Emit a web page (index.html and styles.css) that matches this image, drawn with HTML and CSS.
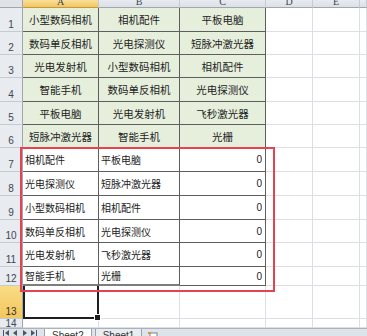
FILE: index.html
```html
<!DOCTYPE html>
<html lang="zh-CN">
<head>
    <meta charset="UTF-8">
    <title>Sheet2</title>
    <link rel="stylesheet" href="styles.css">
</head>
<body>
    <div class="sheet">
        <!-- cabecalho das colunas -->
        <div class="corner"></div>
        <div class="colhead selected">A</div>
        <div class="colhead">B</div>
        <div class="colhead">C</div>
        <div class="colhead">D</div>
        <div class="colhead">E</div>
        <div class="colhead"></div>

        <div class="rowhead">1</div>
        <div class="cell green">小型数码相机</div>
        <div class="cell green">相机配件</div>
        <div class="cell green">平板电脑</div>
        <div class="cell"></div><div class="cell"></div><div class="cell"></div>

        <div class="rowhead">2</div>
        <div class="cell green">数码单反相机</div>
        <div class="cell green">光电探测仪</div>
        <div class="cell green">短脉冲激光器</div>
        <div class="cell"></div><div class="cell"></div><div class="cell"></div>

        <div class="rowhead">3</div>
        <div class="cell green">光电发射机</div>
        <div class="cell green">小型数码相机</div>
        <div class="cell green">相机配件</div>
        <div class="cell"></div><div class="cell"></div><div class="cell"></div>

        <div class="rowhead">4</div>
        <div class="cell green">智能手机</div>
        <div class="cell green">数码单反相机</div>
        <div class="cell green">光电探测仪</div>
        <div class="cell"></div><div class="cell"></div><div class="cell"></div>

        <div class="rowhead">5</div>
        <div class="cell green">平板电脑</div>
        <div class="cell green">光电发射机</div>
        <div class="cell green">飞秒激光器</div>
        <div class="cell"></div><div class="cell"></div><div class="cell"></div>

        <div class="rowhead">6</div>
        <div class="cell green">短脉冲激光器</div>
        <div class="cell green">智能手机</div>
        <div class="cell green">光栅</div>
        <div class="cell"></div><div class="cell"></div><div class="cell"></div>

        <!-- resultado -->
        <div class="rowhead">7</div>
        <div class="cell data">相机配件</div>
        <div class="cell data">平板电脑</div>
        <div class="cell data num">0</div>
        <div class="cell"></div><div class="cell"></div><div class="cell"></div>

        <div class="rowhead">8</div>
        <div class="cell data">光电探测仪</div>
        <div class="cell data">短脉冲激光器</div>
        <div class="cell data num">0</div>
        <div class="cell"></div><div class="cell"></div><div class="cell"></div>

        <div class="rowhead">9</div>
        <div class="cell data">小型数码相机</div>
        <div class="cell data">相机配件</div>
        <div class="cell data num">0</div>
        <div class="cell"></div><div class="cell"></div><div class="cell"></div>

        <div class="rowhead">10</div>
        <div class="cell data">数码单反相机</div>
        <div class="cell data">光电探测仪</div>
        <div class="cell data num">0</div>
        <div class="cell"></div><div class="cell"></div><div class="cell"></div>

        <div class="rowhead">11</div>
        <div class="cell data">光电发射机</div>
        <div class="cell data">飞秒激光器</div>
        <div class="cell data num">0</div>
        <div class="cell"></div><div class="cell"></div><div class="cell"></div>

        <div class="rowhead">12</div>
        <div class="cell data last">智能手机</div>
        <div class="cell data last">光栅</div>
        <div class="cell data num">0</div>
        <div class="cell"></div><div class="cell"></div><div class="cell"></div>

        <div class="rowhead selected">13</div>
        <div class="cell active"><span class="handle"></span></div>
        <div class="cell"></div><div class="cell"></div>
        <div class="cell"></div><div class="cell"></div><div class="cell"></div>

        <div class="rowhead short">14</div>
        <div class="cell"></div><div class="cell"></div><div class="cell"></div>
        <div class="cell"></div><div class="cell"></div><div class="cell"></div>

        <!-- retangulo vermelho desenhado por cima -->
        <div class="frame"></div>
    </div>

    <div class="tabbar">
        <div class="nav">
            <svg width="40" height="8" viewBox="0 0 40 8">
                <rect x="3" y="1" width="1" height="6" fill="#4a5566"/>
                <path d="M9 1 L5 4 L9 7 Z" fill="#4a5566"/>
                <path d="M17 1 L13 4 L17 7 Z" fill="#4a5566"/>
                <path d="M23 1 L27 4 L23 7 Z" fill="#4a5566"/>
                <path d="M31 1 L35 4 L31 7 Z" fill="#4a5566"/>
                <rect x="36" y="1" width="1" height="6" fill="#4a5566"/>
            </svg>
        </div>
        <div class="tab active">Sheet2</div>
        <div class="tab">Sheet1</div>
        <div class="tab add">
            <svg width="10" height="8" viewBox="0 0 10 8">
                <rect x="2" y="2" width="7" height="6" fill="#fff" stroke="#7a8290"/>
                <rect x="0" y="1" width="3" height="2" fill="#e0962a"/>
            </svg>
        </div>
    </div>
</body>
</html>
```

FILE: styles.css
```css
body {
    margin: 0;
    background: #fff;
    font-family: "Noto Sans CJK SC", sans-serif;
    color: #222;
    overflow: hidden;
}

.sheet {
    position: relative;
    display: grid;
    grid-template-columns: 23px 76px 81px 86px 47px 47px 1fr;
    grid-template-rows: 8px 24px 23px 23px 24px 23px 23px 24px 24px 24px 23px 24px 19px 33px 9px;
    height: 328px;
    overflow: hidden;
}

.corner {
    background: #dfe3e8;
    border-right: 1px solid #9ea7b2;
    border-bottom: 1px solid #9ea7b2;
}

.colhead {
    display: flex;
    align-items: flex-end;
    justify-content: center;
    overflow: hidden;
    background: linear-gradient(#e8ebef, #dce1e7);
    border-right: 1px solid #c5cbd3;
    border-bottom: 1px solid #9ea7b2;
    font-family: "Liberation Serif", serif;
    font-size: 10px;
    line-height: 10px;
    color: #3d4652;
}

.colhead.selected {
    background: linear-gradient(#f9e09a, #f1c661);
    border-bottom-color: #c99a3a;
}

.rowhead {
    display: flex;
    align-items: flex-end;
    justify-content: center;
    background: #e8ebef;
    border-right: 1px solid #9ea7b2;
    border-bottom: 1px solid #c5cbd3;
    font-family: "Liberation Sans", sans-serif;
    font-size: 10px;
    line-height: 12px;
    color: #3d4652;
    overflow: hidden;
}

.rowhead.selected {
    background: linear-gradient(#f9dc86, #f3c75e);
    color: #333;
}

.rowhead.short {
    align-items: flex-start;
    line-height: 9px;
}

.cell {
    display: flex;
    align-items: center;
    border-right: 1px solid #dcdfe3;
    border-bottom: 1px solid #dcdfe3;
    white-space: nowrap;
    overflow: hidden;
}

.cell.green {
    justify-content: center;
    background: #e6efdc;
    border-color: #5e5e5e;
    font-size: 10.5px;
}

.cell.data {
    padding-left: 2px;
    border-color: #5e5e5e;
    font-size: 10px;
}

.cell.num {
    justify-content: flex-end;
    padding-right: 3px;
    font-family: "Liberation Sans", sans-serif;
}

.cell.last {
    border-bottom: 2px solid #7d7d7d;
}

.cell.active {
    position: relative;
    overflow: visible;
    border: 2px solid #1e1e1e;
    border-top: none;
}

.handle {
    position: absolute;
    right: -4px;
    bottom: -4px;
    width: 5px;
    height: 5px;
    background: #1e1e1e;
    border: 1px solid #fff;
}

.frame {
    position: absolute;
    left: 20px;
    top: 147px;
    width: 255px;
    height: 145px;
    box-sizing: border-box;
    border: 2px solid #e4434f;
    pointer-events: none;
}

.tabbar {
    display: flex;
    align-items: flex-start;
    height: 8px;
    background: #dfe4ea;
    border-top: 1px solid #a9b2bd;
    box-sizing: border-box;
    overflow: hidden;
    font-family: "Liberation Sans", sans-serif;
    font-size: 10px;
    line-height: 14px;
    color: #333;
}

.nav {
    width: 44px;
    display: flex;
}

.tab {
    padding: 0 7px;
    margin-right: 3px;
    background: #e9edf1;
    border-left: 1px solid #9aa3ad;
    border-right: 1px solid #9aa3ad;
}

.tab.active {
    background: #fff;
}

.tab.add {
    padding: 0 3px;
    border: none;
    background: none;
}

.cell, .colhead, .rowhead, .corner {
    box-sizing: border-box;
}
```
